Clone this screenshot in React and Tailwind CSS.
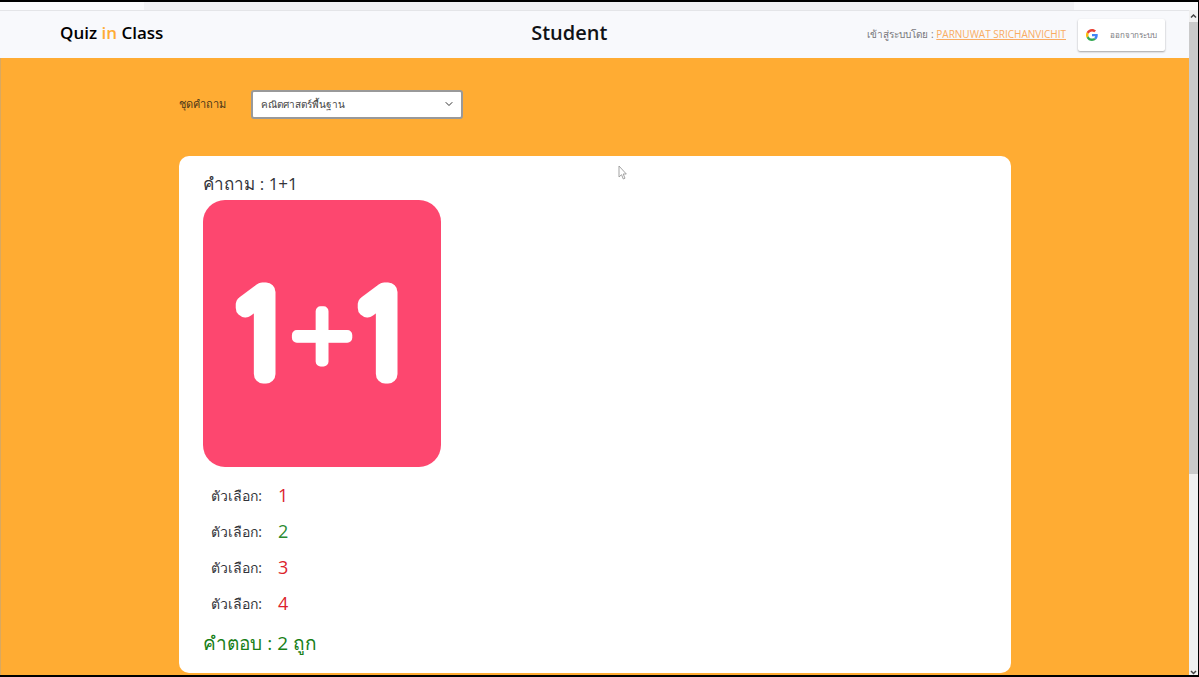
import React from "react";
import { ChevronDown } from "lucide-react";

const choices = [
  { id: 1, text: "1", color: "text-[#dc1f2e]" },
  { id: 2, text: "2", color: "text-[#2a8a2f]" },
  { id: 3, text: "3", color: "text-[#dc1f2e]" },
  { id: 4, text: "4", color: "text-[#dc1f2e]" },
];

function GoogleLogo() {
  return (
    <svg viewBox="0 0 48 48" className="h-3 w-3 shrink-0" aria-hidden="true">
      <path fill="#EA4335" d="M24 9.5c3.54 0 6.71 1.22 9.21 3.6l6.85-6.85C35.9 2.38 30.47 0 24 0 14.62 0 6.51 5.38 2.56 13.22l7.98 6.19C12.43 13.72 17.74 9.5 24 9.5z" />
      <path fill="#4285F4" d="M46.98 24.55c0-1.57-.15-3.09-.38-4.55H24v9.02h12.94c-.58 2.96-2.26 5.48-4.78 7.18l7.73 6c4.51-4.18 7.09-10.36 7.09-17.65z" />
      <path fill="#FBBC05" d="M10.53 28.59c-.48-1.45-.76-2.99-.76-4.59s.27-3.14.76-4.59l-7.98-6.19C.92 16.46 0 20.12 0 24c0 3.88.92 7.54 2.56 10.78l7.97-6.19z" />
      <path fill="#34A853" d="M24 48c6.48 0 11.93-2.13 15.89-5.81l-7.73-6c-2.15 1.45-4.92 2.3-8.16 2.3-6.26 0-11.57-4.22-13.47-9.91l-7.98 6.19C6.51 42.62 14.62 48 24 48z" />
    </svg>
  );
}

function Header() {
  return (
    <header className="grid h-12 grid-cols-[43%_1fr_auto] items-center border-t border-[#e4e5e8] bg-[#f8f9fc] pl-15 pr-6">
      <a href="#home" className="pb-1 text-[17px] font-semibold text-black">
        Quiz <span className="text-[#ffac33]">in</span> Class
      </a>
      <h1 className="-ml-1 pb-1 text-xl font-semibold text-[#101216]">Student</h1>
      <div className="flex items-center gap-3">
        <p className="text-[10px] text-[#77777b]">
          เข้าสู่ระบบโดย :{" "}
          <a href="#profile" className="text-[#f9ac63] underline">
            PARNUWAT SRICHANVICHIT
          </a>
        </p>
        <button className="flex h-8 items-center gap-3 whitespace-nowrap rounded-xs bg-white px-2 text-[8px] text-[#77777b] shadow-[0_1px_2px_rgba(0,0,0,0.35)]">
          <GoogleLogo />
          ออกจากระบบ
        </button>
      </div>
    </header>
  );
}

function QuestionPicture() {
  return (
    <svg viewBox="0 0 238 267" className="block h-[267px] w-[238px]" role="img" aria-label="1+1">
      <rect width="238" height="267" rx="22" fill="#fd476f" />
      <g fill="#fff" stroke="#fff" strokeLinejoin="round" fontFamily="Inter, sans-serif" textAnchor="middle">
        <text x="55" y="174" fontSize="113" fontWeight="100" strokeWidth="19">1</text>
        <text x="119" y="171" fontSize="122" fontWeight="100" strokeWidth="10">+</text>
        <text x="177" y="174" fontSize="113" fontWeight="100" strokeWidth="19">1</text>
      </g>
    </svg>
  );
}

function QuestionCard() {
  return (
    <section className="mt-[37px] rounded-[10px] bg-white px-6 pb-3 pt-3">
      <h2 className="text-[17px] leading-8 text-[#33343a]">คำถาม : 1+1</h2>
      <QuestionPicture />
      <ul className="pl-2 pt-[10px]">
        {choices.map((choice) => (
          <li key={choice.id} className="flex h-9 items-center gap-4 text-[#33343a]">
            <span className="text-[14px]">ตัวเลือก:</span>
            <span className={`text-lg ${choice.color}`}>{choice.text}</span>
          </li>
        ))}
      </ul>
      <p className="pt-1 text-[19px] leading-9 text-[#188018]">คำตอบ : 2 ถูก</p>
    </section>
  );
}

function ScrollTrack() {
  return (
    <div className="flex w-[9px] shrink-0 flex-col items-center bg-[#f0f0f0]" aria-hidden="true">
      <svg viewBox="0 0 9 12" className="h-3 w-[9px]">
        <path d="M2 7.500L4.500 5L7 7.500" fill="none" stroke="#444" strokeWidth="1.500" />
      </svg>
      <div className="h-[68%] w-full bg-[#cacaca]" />
      <svg viewBox="0 0 9 8" className="mt-auto h-2 w-[9px]">
        <path d="M2 4L4.500 6.500L7 4" fill="none" stroke="#444" strokeWidth="1.500" />
      </svg>
    </div>
  );
}

function Pointer() {
  return (
    <svg viewBox="0 0 9 15" className="pointer-events-none absolute left-[618px] top-[163px] h-[15px] w-[9px]" aria-hidden="true">
      <path d="M1 1V12L3.500 9.700L5.300 14L7 13.200L5.200 9H8.300Z" fill="#fff" stroke="#999" strokeWidth="0.900" />
    </svg>
  );
}

export default function App() {
  return (
    <div className="relative flex min-h-screen flex-col border-y-2 border-r border-black bg-[#fafafc] font-['Open_Sans','Noto_Sans',sans-serif]">
      <div className="mr-31 ml-36 h-2 bg-[#f1f1f4]" />
      <div className="flex flex-1">
        <div className="flex min-w-0 flex-1 flex-col">
          <Header />
          <main className="flex-1 border-l border-[#d9a860] bg-[#ffac33] px-[15%] pt-8">
            <div className="flex h-[29px] items-center">
              <label htmlFor="question-set" className="w-18 text-[11px] text-[#4c3819]">
                ชุดคำถาม
              </label>
              <div className="relative">
                <select
                  id="question-set"
                  className="block h-[29px] w-[212px] appearance-none rounded-[3px] border-2 border-[#999] bg-white px-2 text-[10px] text-[#444] outline-none"
                >
                  <option>คณิตศาสตร์พื้นฐาน</option>
                </select>
                <ChevronDown className="pointer-events-none absolute right-2 top-2 h-3 w-3 text-[#333]" strokeWidth={2} />
              </div>
            </div>
            <QuestionCard />
          </main>
        </div>
        <ScrollTrack />
      </div>
      <Pointer />
    </div>
  );
}
